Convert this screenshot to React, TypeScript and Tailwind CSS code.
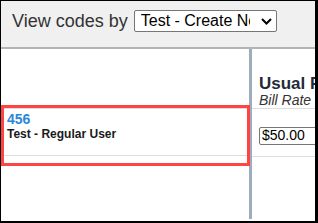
import React from "react";

const font = { fontFamily: '"Liberation Sans", Arial, sans-serif' };

export default function App() {
  return (
    <div
      className="relative box-border w-[318px] h-[223px] overflow-hidden bg-white border-l border-t border-r-[3px] border-b-2 border-black"
      style={font}
    >
      <div className="flex items-start h-[48px] pt-[9px] pl-[11px] bg-[#f0f0f0] border-b-2 border-[#b4b4b4] whitespace-nowrap">
        <span className="text-[18px] leading-[22px] text-[#333333] mr-[6px]">View codes by</span>
        <div className="flex items-center shrink-0 h-[22px] w-[143px] bg-white border border-[#767676] rounded-[2px] pl-[6px] cursor-default">
          <span className="block w-[109px] overflow-hidden text-[16px] leading-[20px] text-black">
            Test - Create New Code
          </span>
          <svg width="11" height="7" viewBox="0 0 11 7" className="ml-[11px]">
            <polyline points="1,1 5.5,5.5 10,1" fill="none" stroke="#000" strokeWidth="2" />
          </svg>
        </div>
      </div>

      <div className="flex h-[170px]">
        <div className="w-[248px] shrink-0">
          <div className="h-[60px] border-b border-[#dddddd]" />
          <div className="h-[47px] border-b border-[#dddddd] pl-[6px] pt-[2px]">
            <div className="text-[14px] leading-[16px] font-bold text-[#2b88d6]">456</div>
            <div className="text-[12px] leading-[14px] font-bold text-[#1a1a1a]">Test - Regular User</div>
          </div>
        </div>

        <div className="w-[3px] shrink-0 bg-[#9eacbb]" />

        <div className="flex-1 min-w-0 whitespace-nowrap">
          <div className="h-[60px] border-b border-[#dddddd] pl-[7px] pt-[25px]">
            <div className="text-[17px] leading-[19px] font-bold text-[#1f2a3a]">Usual Rate</div>
            <div className="text-[14px] leading-[15px] italic text-[#333333]">Bill Rate</div>
          </div>
          <div className="h-[48px] border-b border-[#dddddd] pl-[7px] pt-[14px]">
            <input
              readOnly
              value="$50.00"
              className="box-border h-[18px] w-[100px] border border-[#767676] rounded-[2px] px-[2px] text-[14px] text-black bg-white"
              style={font}
            />
          </div>
        </div>
      </div>

      <div className="absolute left-0 top-[104px] w-[249px] h-[61px] border-[3px] border-[#ff4444] pointer-events-none" />
    </div>
  );
}
